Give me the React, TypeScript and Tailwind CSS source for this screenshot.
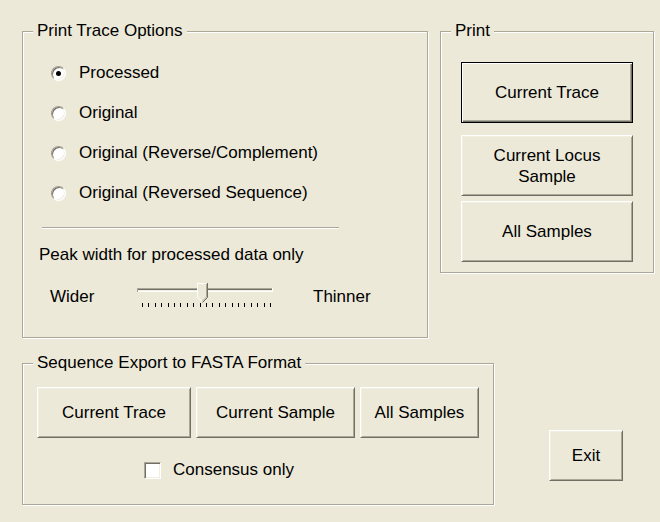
import React from 'react';

const GroupBox = ({ title, className, children }: { title: string; className?: string; children?: React.ReactNode }) => (
  <fieldset className={`border border-[#ACA899] shadow-[1px_1px_0_#fff,inset_1px_1px_0_#fff] ${className ?? ''}`}>
    <legend className="ml-[10px] px-[4px] leading-[20px] bg-[#ECE9D8]">{title}</legend>
    {children}
  </fieldset>
);

const Btn = ({ children, className, isDefault }: { children: React.ReactNode; className?: string; isDefault?: boolean }) => (
  <button
    className={`flex items-center justify-center text-center leading-[21px] bg-[#ECE9D8] ${
      isDefault
        ? 'border border-black shadow-[inset_1px_1px_0_#fff,inset_-1px_-1px_0_#716F64,inset_-2px_-2px_0_#ACA899]'
        : 'border border-t-white border-l-white border-r-[#716F64] border-b-[#716F64] shadow-[inset_1px_1px_0_#F1EFE2,inset_-1px_-1px_0_#ACA899]'
    } ${className ?? ''}`}
  >
    {children}
  </button>
);

// classic sunken round option button
const Radio = ({ checked }: { checked?: boolean }) => (
  <span className="flex items-center justify-center w-[15px] h-[15px] shrink-0 rounded-full bg-white border border-t-[#9D9A8C] border-l-[#9D9A8C] border-r-white border-b-white shadow-[inset_1px_1px_0_#716F64,inset_-1px_-1px_0_#F1EFE2]">
    {checked && <span className="w-[5px] h-[5px] rounded-full bg-black" />}
  </span>
);

const RadioRow = ({ label, checked }: { label: string; checked?: boolean }) => (
  <div className="flex h-[40px] items-center gap-[13px]">
    <Radio checked={checked} />
    <span className="leading-[20px]">{label}</span>
  </div>
);

const Slider = () => {
  const ticks = Array.from({ length: 21 }, (_, i) => 7 + i * 6.4);
  return (
    <svg width="140" height="28" viewBox="0 0 140 28" className="self-start shrink-0">
      <rect x="2" y="6" width="136" height="1" fill="#ACA899" />
      <rect x="2" y="7" width="136" height="1" fill="#716F64" />
      <rect x="2" y="8" width="136" height="1" fill="#F1EFE2" />
      <rect x="2" y="9" width="136" height="1" fill="#fff" />
      <rect x="2" y="6" width="1" height="4" fill="#ACA899" />
      <rect x="137" y="6" width="1" height="4" fill="#fff" />
      {ticks.map((x) => (
        <rect key={x} x={Math.round(x)} y="21" width="1" height="4" fill="#000" />
      ))}
      <polygon points="62,1 72,1 72,15 67,20 62,15" fill="#ECE9D8" />
      <polyline points="62.5,15 62.5,1.5 71.5,1.5" fill="none" stroke="#fff" />
      <polyline points="72.5,1 72.5,15.5 67.5,20.5" fill="none" stroke="#716F64" />
      <polyline points="71.5,2 71.5,15 67,19.5" fill="none" stroke="#ACA899" />
      <line x1="62.5" y1="15" x2="67" y2="19.5" stroke="#fff" />
    </svg>
  );
};

export default function App() {
  return (
    <div className="w-[660px] h-[522px] bg-[#ECE9D8] pl-[22px] pt-[21px] font-['Liberation_Sans',Arial,sans-serif] text-[17px] text-black overflow-hidden">
      <div className="flex items-start">
        <GroupBox title="Print Trace Options" className="w-[406px] h-[317px] shrink-0">
          <div className="pt-[12px] pl-[28px]">
            <RadioRow label="Processed" checked />
            <RadioRow label="Original" />
            <RadioRow label="Original (Reverse/Complement)" />
            <RadioRow label="Original (Reversed Sequence)" />
          </div>
          <div className="ml-[19px] mt-[14px] w-[297px] h-[2px] border-t border-t-[#ACA899] border-b border-b-white" />
          <p className="ml-[16px] mt-[16px] leading-[20px]">Peak width for processed data only</p>
          <div className="flex h-[30px] items-center mt-[17px]">
            <span className="ml-[27px] w-[85px] leading-[20px]">Wider</span>
            <Slider />
            <span className="ml-[38px] leading-[20px]">Thinner</span>
          </div>
        </GroupBox>

        <GroupBox title="Print" className="ml-[12px] w-[214px] h-[252px] shrink-0">
          <div className="flex flex-col pl-[20px] pt-[21px]">
            <Btn isDefault className="w-[172px] h-[61px]">Current Trace</Btn>
            <Btn className="w-[172px] h-[61px] mt-[12px]">
              Current Locus
              <br />
              Sample
            </Btn>
            <Btn className="w-[172px] h-[61px] mt-[5px]">All Samples</Btn>
          </div>
        </GroupBox>
      </div>

      <div className="flex items-start mt-[15px]">
        <GroupBox title="Sequence Export to FASTA Format" className="w-[472px] h-[152px] shrink-0">
          <div className="flex gap-[5px] pl-[14px] pt-[14px]">
            <Btn className="w-[154px] h-[51px]">Current Trace</Btn>
            <Btn className="w-[159px] h-[51px]">Current Sample</Btn>
            <Btn className="w-[119px] h-[51px]">All Samples</Btn>
          </div>
          <div className="flex items-center h-[20px] mt-[22px] pl-[121px] gap-[12px]">
            <span className="w-[17px] h-[17px] shrink-0 bg-white border border-t-[#ACA899] border-l-[#ACA899] border-r-white border-b-white shadow-[inset_1px_1px_0_#716F64,inset_-1px_-1px_0_#F1EFE2]" />
            <span className="leading-[20px]">Consensus only</span>
          </div>
        </GroupBox>
        <Btn className="ml-[55px] mt-[77px] w-[74px] h-[51px] shrink-0">Exit</Btn>
      </div>
    </div>
  );
}
